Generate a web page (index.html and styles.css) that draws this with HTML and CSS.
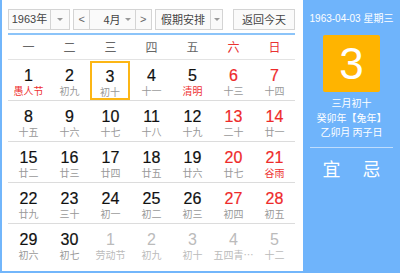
FILE: index.html
```html
<!DOCTYPE html>
<html>
<head>
<meta charset="utf-8">
<link rel="stylesheet" href="styles.css">
</head>
<body>
<div class="cal">
  <div class="main">
    <div class="toolbar">
      <div class="sel sel-year"><span class="sel-text">1963年</span><span class="sel-arrow"><i class="tri"></i></span></div>
      <div class="sel sel-month"><span class="nav">&lt;</span><span class="sel-text m">4月</span><span class="sel-arrow m"><i class="tri"></i></span><span class="nav nav-r">&gt;</span></div>
      <div class="sel sel-hol"><span class="sel-text">假期安排</span><span class="sel-arrow"><i class="tri"></i></span></div>
      <div class="btn-today">返回今天</div>
    </div>
    <div class="week">
      <span>一</span><span>二</span><span>三</span><span>四</span><span>五</span><span class="we">六</span><span class="we">日</span>
    </div>
    <div class="grid">
      <div class="row">
        <div class="cell"><b>1</b><small class="fest">愚人节</small></div>
        <div class="cell"><b>2</b><small>初九</small></div>
        <div class="cell cur"><b>3</b><small>初十</small></div>
        <div class="cell"><b>4</b><small>十一</small></div>
        <div class="cell"><b>5</b><small class="fest">清明</small></div>
        <div class="cell we"><b>6</b><small>十三</small></div>
        <div class="cell we"><b>7</b><small>十四</small></div>
      </div>
      <div class="row">
        <div class="cell"><b>8</b><small>十五</small></div>
        <div class="cell"><b>9</b><small>十六</small></div>
        <div class="cell"><b>10</b><small>十七</small></div>
        <div class="cell"><b>11</b><small>十八</small></div>
        <div class="cell"><b>12</b><small>十九</small></div>
        <div class="cell we"><b>13</b><small>二十</small></div>
        <div class="cell we"><b>14</b><small>廿一</small></div>
      </div>
      <div class="row">
        <div class="cell"><b>15</b><small>廿二</small></div>
        <div class="cell"><b>16</b><small>廿三</small></div>
        <div class="cell"><b>17</b><small>廿四</small></div>
        <div class="cell"><b>18</b><small>廿五</small></div>
        <div class="cell"><b>19</b><small>廿六</small></div>
        <div class="cell we"><b>20</b><small>廿七</small></div>
        <div class="cell we"><b>21</b><small class="fest">谷雨</small></div>
      </div>
      <div class="row">
        <div class="cell"><b>22</b><small>廿九</small></div>
        <div class="cell"><b>23</b><small>三十</small></div>
        <div class="cell"><b>24</b><small>初一</small></div>
        <div class="cell"><b>25</b><small>初二</small></div>
        <div class="cell"><b>26</b><small>初三</small></div>
        <div class="cell we"><b>27</b><small>初四</small></div>
        <div class="cell we"><b>28</b><small>初五</small></div>
      </div>
      <div class="row last">
        <div class="cell"><b>29</b><small>初六</small></div>
        <div class="cell"><b>30</b><small>初七</small></div>
        <div class="cell out"><b>1</b><small>劳动节</small></div>
        <div class="cell out"><b>2</b><small>初九</small></div>
        <div class="cell out"><b>3</b><small>初十</small></div>
        <div class="cell out"><b>4</b><small>五四青…</small></div>
        <div class="cell out"><b>5</b><small>十二</small></div>
      </div>
    </div>
  </div>
  <div class="side">
    <div class="side-date">1963-04-03 星期三</div>
    <div class="big-day">3</div>
    <div class="lunar">
      <p>三月初十</p>
      <p>癸卯年【兔年】</p>
      <p>乙卯月 丙子日</p>
    </div>
    <div class="yiji"><span>宜</span><span>忌</span></div>
  </div>
</div>
</body>
</html>
```

FILE: styles.css
```css
html, body {
  margin: 0;
  padding: 0;
  background: #fff;
}
body {
  font-family: "Liberation Sans", "Noto Sans CJK SC", sans-serif;
}
.cal {
  width: 400px;
  height: 273px;
  display: flex;
}
.main {
  border-left: 2px solid #72b6fb;
  border-bottom: 2px solid #72b6fb;
  padding: 0 8px 0 6px;
  box-sizing: border-box;
  width: 303px;
  height: 273px;
  display: flex;
  flex-direction: column;
}
.toolbar {
  display: flex;
  height: 21px;
  margin-top: 9px;
  padding-bottom: 3px;
  border-bottom: 2px solid #8cc4f9;
  font-family: "Noto Sans CJK SC", sans-serif;
  font-size: 11px;
  color: #444;
}
.sel, .btn-today {
  display: flex;
  height: 21px;
  box-sizing: border-box;
  border: 1px solid #d4d4d4;
  background: #fafafa;
  line-height: 19px;
}
.sel-text {
  text-align: center;
}
.sel-year .sel-text { width: 41px; font-family: "Liberation Sans", "Noto Sans CJK SC", sans-serif; }
.sel-year { width: 62px; }
.sel-arrow {
  border-left: 1px solid #d4d4d4;
  flex: 1;
  display: flex;
  align-items: center;
  justify-content: center;
}
.sel-arrow.m { border-left: none; flex: none; width: 14px; }
.tri {
  width: 0;
  height: 0;
  border-left: 3px solid transparent;
  border-right: 3px solid transparent;
  border-top: 3px solid #999;
}
.sel-month { margin-left: 3px; width: 79px; }
.nav {
  width: 16px;
  text-align: center;
  border-right: 1px solid #d4d4d4;
  color: #666;
  font-family: "Liberation Sans", sans-serif;
}
.nav-r { border-right: none; border-left: 1px solid #d4d4d4; }
.sel-text.m { width: 31px; text-align: right; }
.sel-hol { margin-left: 3px; width: 68px; }
.sel-hol .sel-text { width: 54px; }
.btn-today {
  margin-left: 10px;
  width: 62px;
  justify-content: center;
}
.week {
  display: grid;
  grid-template-columns: repeat(7, 41px);
  height: 24px;
  line-height: 24px;
  border-bottom: 1px solid #e3e3e3;
  font-family: "Noto Sans CJK SC", sans-serif;
  font-size: 12px;
  color: #666;
  text-align: center;
}
.week .we { color: #e93232; }
.grid {
  display: flex;
  flex-direction: column;
}
.row {
  display: grid;
  grid-template-columns: repeat(7, 41px);
  height: 41px;
  box-sizing: border-box;
  border-bottom: 1px solid #dcdcdc;
}
.row.last { border-bottom: none; }
.cell {
  display: flex;
  flex-direction: column;
  align-items: center;
  padding-top: 7px;
  box-sizing: border-box;
}
.cell b {
  font-family: "Liberation Sans", sans-serif;
  font-weight: normal;
  font-size: 16px;
  line-height: 18px;
  color: #111;
  -webkit-text-stroke: 0.2px #111;
}
.cell small {
  font-family: "Noto Sans CJK SC", sans-serif;
  font-size: 10px;
  line-height: 12px;
  color: #999;
  white-space: nowrap;
}
.cell small.fest { color: #e33; }
.cell.we b { color: #ee2a2a; -webkit-text-stroke: 0.2px #ee2a2a; }
.cell.out b { color: #bbb; -webkit-text-stroke: 0; }
.cell.out small { color: #bbb; }
.cell.cur {
  border: 2px solid #fcb615;
  margin: 1px 1px 1px 0;
  padding-top: 5px;
}
.side {
  width: 97px;
  height: 273px;
  background: #6fb4fb;
  color: #fff;
  display: flex;
  flex-direction: column;
  align-items: center;
  font-family: "Liberation Sans", "Noto Sans CJK SC", sans-serif;
}
.side-date {
  margin-top: 12px;
  font-size: 10px;
  line-height: 14px;
}
.big-day {
  margin-top: 9px;
  width: 57px;
  height: 57px;
  background: #ffb400;
  border-radius: 2px;
  font-size: 44px;
  line-height: 57px;
  text-align: center;
}
.lunar {
  margin-top: 4px;
  width: 83px;
  padding-bottom: 7px;
  border-bottom: 1px solid rgba(255,255,255,0.55);
  font-family: "Noto Sans CJK SC", sans-serif;
  font-size: 10px;
  text-align: center;
}
.lunar p {
  margin: 0;
  line-height: 14.5px;
}
.yiji {
  margin-top: 8px;
  display: flex;
  gap: 22px;
  font-family: "Noto Sans CJK SC", sans-serif;
  font-size: 18px;
  line-height: 24px;
}
```
